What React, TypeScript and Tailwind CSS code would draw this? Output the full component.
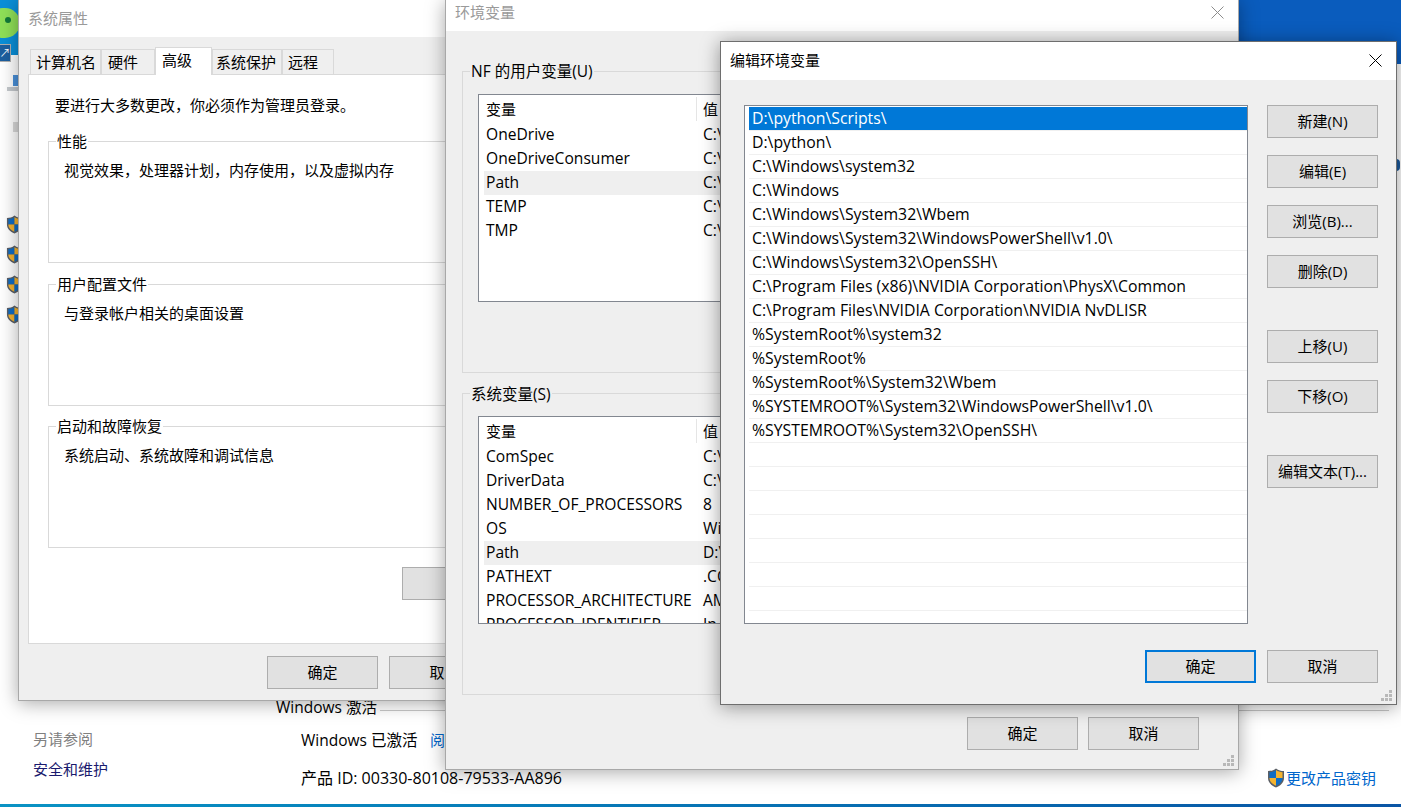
import type { ReactNode } from 'react';

const FONT = "font-['Open_Sans','Noto_Sans_CJK_SC',sans-serif]";

const pathRows = [
  'D:\\python\\Scripts\\',
  'D:\\python\\',
  'C:\\Windows\\system32',
  'C:\\Windows',
  'C:\\Windows\\System32\\Wbem',
  'C:\\Windows\\System32\\WindowsPowerShell\\v1.0\\',
  'C:\\Windows\\System32\\OpenSSH\\',
  'C:\\Program Files (x86)\\NVIDIA Corporation\\PhysX\\Common',
  'C:\\Program Files\\NVIDIA Corporation\\NVIDIA NvDLISR',
  '%SystemRoot%\\system32',
  '%SystemRoot%',
  '%SystemRoot%\\System32\\Wbem',
  '%SYSTEMROOT%\\System32\\WindowsPowerShell\\v1.0\\',
  '%SYSTEMROOT%\\System32\\OpenSSH\\',
  '', '', '', '', '', '', '',
];

const userVars: [string, string][] = [
  ['OneDrive', 'C:\\'],
  ['OneDriveConsumer', 'C:\\'],
  ['Path', 'C:\\'],
  ['TEMP', 'C:\\'],
  ['TMP', 'C:\\'],
];

const sysVars: [string, string][] = [
  ['ComSpec', 'C:\\'],
  ['DriverData', 'C:\\'],
  ['NUMBER_OF_PROCESSORS', '8'],
  ['OS', 'Wi'],
  ['Path', 'D:\\'],
  ['PATHEXT', '.CO'],
  ['PROCESSOR_ARCHITECTURE', 'AM'],
  ['PROCESSOR_IDENTIFIER', 'In'],
];

const tabs: { label: string; box: string }[] = [
  { label: '计算机名', box: 'w-[71px] pl-[5px]' },
  { label: '硬件', box: 'w-[54px] pl-[6px]' },
  { label: '高级', box: 'w-[57px] pl-[6px]' },
  { label: '系统保护', box: 'w-[70px] pl-[3px]' },
  { label: '远程', box: 'w-[52px] pl-[5px]' },
];

function Shield({ className }: { className: string }) {
  return (
    <svg viewBox="0 0 18 20" className={className}>
      <path d="M9 .5 C6.5 2.5 4 3 1 3 V10 C1 14.5 4.5 17.8 9 19.5 C13.5 17.8 17 14.5 17 10 V3 C14 3 11.500 2.500 9 .5Z" fill="#5b5f66" />
      <path d="M9 2 C7 3.500 5 4 2.500 4.200 V10 H9Z" fill="#0f6cc4" />
      <path d="M9 2 C11 3.500 13 4 15.500 4.200 V10 H9Z" fill="#f4b32f" />
      <path d="M2.500 10 H9 V17.800 C5.500 16.300 2.500 13.800 2.500 10Z" fill="#f4b32f" />
      <path d="M15.500 10 H9 V17.800 C12.500 16.300 15.500 13.800 15.500 10Z" fill="#0f6cc4" />
    </svg>
  );
}

function CloseX({ className }: { className: string }) {
  return (
    <svg viewBox="0 0 13 13" className={className} fill="none" stroke="currentColor" strokeWidth="1">
      <path d="M.5 .5 L12.500 12.500 M12.500 .5 L.5 12.500" />
    </svg>
  );
}

function Grip() {
  return (
    <svg viewBox="0 0 12 12" className="absolute bottom-[2px] right-[3px] h-3 w-3" fill="#b8b8b8">
      <rect x="8" y="0" width="3" height="3" />
      <rect x="4" y="4" width="3" height="3" />
      <rect x="8" y="4" width="3" height="3" />
      <rect x="0" y="8" width="3" height="3" />
      <rect x="4" y="8" width="3" height="3" />
      <rect x="8" y="8" width="3" height="3" />
    </svg>
  );
}

function WinButton({ children, focused }: { children: ReactNode; focused?: boolean }) {
  return (
    <div
      className={`flex h-[33px] w-[111px] shrink-0 items-center justify-center bg-[#e1e1e1] text-[15px] text-black ${
        focused ? 'border-2 border-[#0078d7]' : 'border border-[#adadad]'
      }`}
    >
      {children}
    </div>
  );
}

function Group({ title, titleTop, className, children }: { title: string; titleTop: string; className: string; children?: ReactNode }) {
  return (
    <div className={`relative border border-[#d9d9d9] ${className}`}>
      <span className={`absolute left-[7px] bg-[#efefef] px-px text-[15.5px] leading-[20px] text-black ${titleTop}`}>{title}</span>
      {children}
    </div>
  );
}

function PanelGroup({ title, text, className }: { title: string; text: string; className: string }) {
  return (
    <div className={`relative h-[122px] border border-[#d9d9d9] ${className}`}>
      <span className="absolute left-[7px] top-[-11px] bg-white px-px text-[15px] leading-[20px] text-black">{title}</span>
      <p className="pl-[15px] pt-[18px] text-[15px] leading-[20px] text-black">{text}</p>
    </div>
  );
}

function VarList({ rows, hot, className }: { rows: [string, string][]; hot: number; className: string }) {
  return (
    <div className={`overflow-hidden border border-[#828790] bg-white pl-[5px] pt-[3px] ${className}`}>
      <div className="flex h-[25px] items-center pb-[3px] text-[15px] text-black">
        <span className="w-[212px] pl-[2px]">变量</span>
        <span className="mr-[6px] h-[24px] w-px bg-[#e5e5e5]" />
        <span>值</span>
      </div>
      {rows.map(([name, value], i) => (
        <div
          key={name}
          className={`flex h-[24px] items-center whitespace-nowrap text-[15.6px] text-black ${i === hot ? 'bg-[#efefef]' : ''}`}
        >
          <span className="w-[219px] pl-[2px]">{name}</span>
          <span>{value}</span>
        </div>
      ))}
    </div>
  );
}

function SystemProps() {
  return (
    <div className="absolute left-[18px] top-0 flex h-[701px] w-[700px] flex-col border border-t-0 border-[#a8a8a8] bg-[#efefef] shadow-[0_2px_18px_rgba(0,0,0,0.35)]">
      <div className="flex h-[37px] shrink-0 items-center bg-white pl-[9px] text-[15px] text-[#9a9a9a]">系统属性</div>
      <div className="flex h-[37px] items-end pl-[11px] text-[15px] text-black">
        {tabs.map(({ label, box }) => {
          const active = label === '高级';
          return (
            <div
              key={label}
              className={`flex items-center border border-b-0 border-[#d9d9d9] ${box} ${
                active ? 'relative z-10 mb-[-1px] h-[28px] bg-white pb-[3px]' : 'h-[25px] bg-[#efefef]'
              }`}
            >
              {label}
            </div>
          );
        })}
      </div>
      <div className="ml-[9px] flex h-[570px] w-[640px] flex-col border border-[#d9d9d9] bg-white pl-[19px]">
        <p className="pl-[7px] pt-[20px] text-[15px] leading-[20px] text-black">要进行大多数更改，你必须作为管理员登录。</p>
        <PanelGroup title="性能" text="视觉效果，处理器计划，内存使用，以及虚拟内存" className="mt-[26px] w-[600px]" />
        <PanelGroup title="用户配置文件" text="与登录帐户相关的桌面设置" className="mt-[21px] w-[600px]" />
        <PanelGroup title="启动和故障恢复" text="系统启动、系统故障和调试信息" className="mt-[20px] w-[600px]" />
        <div className="mt-[19px] ml-[354px] h-[33px] w-[111px] border border-[#adadad] bg-[#e1e1e1]" />
      </div>
      <div className="mt-[12px] flex gap-[11px] pl-[248px]">
        <WinButton>确定</WinButton>
        <WinButton>取消</WinButton>
      </div>
    </div>
  );
}

function EnvVars() {
  return (
    <div className="absolute left-[445px] top-0 flex h-[770px] w-[794px] flex-col border border-t-0 border-[#a8a8a8] bg-[#efefef] shadow-[0_2px_18px_rgba(0,0,0,0.35)]">
      <div className="flex h-[31px] shrink-0 items-center justify-between bg-white pb-[6px] pl-[9px] pr-[14px] text-[15px] text-[#9a9a9a]">
        环境变量
        <CloseX className="h-[13px] w-[13px] text-[#8c8c8c]" />
      </div>
      <Group title="NF 的用户变量(U)" titleTop="top-[-11px]" className="ml-[16px] mt-[40px] h-[302px] w-[744px]">
        <VarList rows={userVars} hot={2} className="ml-[15px] mt-[22px] h-[208px] w-[700px]" />
      </Group>
      <Group title="系统变量(S)" titleTop="top-[-10px]" className="ml-[16px] mt-[20px] h-[302px] w-[744px]">
        <VarList rows={sysVars} hot={4} className="ml-[15px] mt-[22px] h-[208px] w-[700px]" />
      </Group>
      <div className="mt-[22px] flex gap-[10px] pl-[521px]">
        <WinButton>确定</WinButton>
        <WinButton>取消</WinButton>
      </div>
      <Grip />
    </div>
  );
}

function EditEnv() {
  return (
    <div className="absolute left-[720px] top-[41px] flex h-[664px] w-[677px] flex-col border border-[#6e6e6e] bg-[#efefef] shadow-[0_2px_18px_rgba(0,0,0,0.4)]">
      <div className="flex h-[38px] shrink-0 items-center justify-between bg-white pb-[2px] pl-[9px] pr-[14px] text-[15px] text-black">
        编辑环境变量
        <CloseX className="h-[13px] w-[13px] text-black" />
      </div>
      <div className="flex pl-[23px] pt-[25px]">
        <div className="h-[519px] w-[504px] overflow-hidden border border-[#828790] bg-white pl-[4px] pt-[1px]">
          {pathRows.map((row, i) => (
            <div
              key={i}
              className={`flex h-[24px] items-center whitespace-nowrap border-b border-[#f0f0f0] pl-[3px] text-[15.8px] ${
                i === 0 ? 'bg-[#0078d7] text-white' : 'text-black'
              }`}
            >
              {row}
            </div>
          ))}
        </div>
        <div className="ml-[19px] flex flex-col">
          <WinButton>新建(N)</WinButton>
          <div className="mt-[17px]"><WinButton>编辑(E)</WinButton></div>
          <div className="mt-[17px]"><WinButton>浏览(B)...</WinButton></div>
          <div className="mt-[17px]"><WinButton>删除(D)</WinButton></div>
          <div className="mt-[42px]"><WinButton>上移(U)</WinButton></div>
          <div className="mt-[17px]"><WinButton>下移(O)</WinButton></div>
          <div className="mt-[42px]"><WinButton>编辑文本(T)...</WinButton></div>
        </div>
      </div>
      <div className="mt-[26px] flex justify-end gap-[11px] pr-[18px]">
        <WinButton focused>确定</WinButton>
        <WinButton>取消</WinButton>
      </div>
      <Grip />
    </div>
  );
}

export default function App() {
  return (
    <div className={`relative h-[807px] w-[1401px] overflow-hidden bg-white ${FONT}`}>
      {/* desktop behind the windows */}
      <div className="absolute left-0 top-0 h-[55px] w-[18px] overflow-hidden bg-[#0a8fd8]">
        <div className="absolute left-[-12px] top-[8px] h-[30px] w-[32px] rounded-full bg-[#8fe058]" />
        <div className="absolute left-[5px] top-[17px] h-[6px] w-[6px] rounded-full bg-[#127a3a]" />
      </div>
      <div className="absolute left-0 top-[44px] flex h-[18px] w-[11px] items-center justify-center border-y border-r border-[#b0b0b0] bg-[#1d5f9f] text-[11px] text-white">↗</div>
      <div className="absolute left-[13px] top-[75px] h-[11px] w-[5px] bg-[#4a90d9]" />
      <div className="absolute left-[7px] top-[87px] h-[4px] w-[11px] bg-[#c4c8cc]" />
      <div className="absolute left-[13px] top-[122px] h-[10px] w-[5px] bg-[#d8d8d8]" />
      <div className="absolute right-0 top-0 h-[64px] w-[170px] bg-[#0a5cbd]" />
      <div className="absolute left-[1392px] top-[159px] h-[12px] w-[8px] rounded-full bg-[#1a5a9e]" />
      <div className="absolute bottom-0 left-0 h-[3px] w-full bg-gradient-to-r from-[#0a93c4] to-[#0a55a5]" />

      <div className="absolute left-[6px] top-[215px] flex flex-col gap-[11px]">
        <Shield className="h-[19px] w-[17px]" />
        <Shield className="h-[19px] w-[17px]" />
        <Shield className="h-[19px] w-[17px]" />
        <Shield className="h-[19px] w-[17px]" />
      </div>

      <div className="absolute left-[33px] top-[729px] text-[15px] leading-[20px] text-[#808080]">另请参阅</div>
      <div className="absolute left-[33px] top-[759px] text-[15px] leading-[20px] text-[#1a1a6e]">安全和维护</div>
      <div className="absolute left-[276px] top-[697px] text-[15.5px] leading-[20px] text-black">Windows 激活</div>
      <div className="absolute left-[301px] top-[730px] text-[15.5px] leading-[20px] text-black">Windows 已激活</div>
      <div className="absolute left-[430px] top-[730px] text-[15px] leading-[20px] text-[#0066cc]">阅</div>
      <div className="absolute left-[301px] top-[768px] text-[16px] leading-[20px] text-black">产品 ID: 00330-80108-79533-AA896</div>
      <div className="absolute left-[1267px] top-[768px] flex items-center">
        <Shield className="h-[20px] w-[18px]" />
        <span className="ml-px text-[15px] leading-[20px] text-[#0066cc]">更改产品密钥</span>
      </div>
      <div className="absolute left-[380px] top-[710px] h-px w-[1009px] bg-[#c8c8c8]" />

      <SystemProps />
      <EnvVars />
      <EditEnv />
    </div>
  );
}
